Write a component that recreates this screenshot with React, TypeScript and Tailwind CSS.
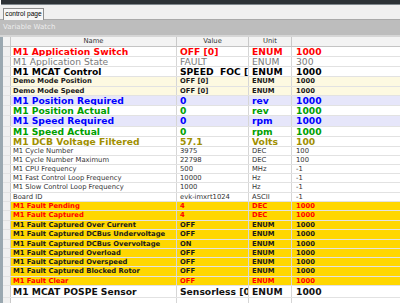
import React from "react";

type Row = {
  name: string;
  value: string;
  unit: string;
  period: string;
  h: number;
  text: string;
  bg: string;
};

const BIG = "text-[9.2px] font-bold";
const SMALLB = "text-[6.8px] font-bold";
const SMALL = "text-[6.8px]";

const rows: Row[] = [
  { name: "M1 Application Switch", value: "OFF [0]", unit: "ENUM", period: "1000", h: 10, text: `${BIG} text-[#ff0000]`, bg: "bg-white" },
  { name: "M1 Application State", value: "FAULT", unit: "ENUM", period: "300", h: 10, text: "text-[9.2px] text-[#7a7a7a]", bg: "bg-white" },
  { name: "M1 MCAT Control", value: "SPEED\u00a0\u00a0FOC [4]", unit: "ENUM", period: "1000", h: 10, text: `${BIG} text-black`, bg: "bg-white" },
  { name: "Demo Mode Position", value: "OFF [0]", unit: "ENUM", period: "1000", h: 10, text: `${SMALLB} text-[#1a1a1a]`, bg: "bg-[#fdf9e1]" },
  { name: "Demo Mode Speed", value: "OFF [0]", unit: "ENUM", period: "1000", h: 9, text: `${SMALLB} text-[#1a1a1a]`, bg: "bg-[#fdf9e1]" },
  { name: "M1 Position Required", value: "0", unit: "rev", period: "1000", h: 10, text: `${BIG} text-[#0000ff]`, bg: "bg-[#e6e6fa]" },
  { name: "M1 Position Actual", value: "0", unit: "rev", period: "1000", h: 10, text: `${BIG} text-[#00a000]`, bg: "bg-white" },
  { name: "M1 Speed Required", value: "0", unit: "rpm", period: "1000", h: 11, text: `${BIG} text-[#0000ff]`, bg: "bg-[#e6e6fa]" },
  { name: "M1 Speed Actual", value: "0", unit: "rpm", period: "1000", h: 10, text: `${BIG} text-[#00a000]`, bg: "bg-white" },
  { name: "M1 DCB Voltage Filtered", value: "57.1", unit: "Volts", period: "100", h: 10, text: `${BIG} text-[#a08f00]`, bg: "bg-white" },
  { name: "M1 Cycle Number", value: "3975", unit: "DEC", period: "100", h: 9, text: `${SMALL} text-[#333333]`, bg: "bg-white" },
  { name: "M1 Cycle Number Maximum", value: "22798", unit: "DEC", period: "100", h: 9, text: `${SMALL} text-[#333333]`, bg: "bg-white" },
  { name: "M1 CPU Frequency", value: "500", unit: "MHz", period: "-1", h: 9, text: `${SMALL} text-[#333333]`, bg: "bg-white" },
  { name: "M1 Fast Control Loop Frequency", value: "10000", unit: "Hz", period: "-1", h: 9, text: `${SMALL} text-[#333333]`, bg: "bg-white" },
  { name: "M1 Slow Control Loop Frequency", value: "1000", unit: "Hz", period: "-1", h: 10, text: `${SMALL} text-[#333333]`, bg: "bg-white" },
  { name: "Board ID", value: "evk-imxrt1024", unit: "ASCII", period: "-1", h: 9, text: `${SMALL} text-[#333333]`, bg: "bg-white" },
  { name: "M1 Fault Pending", value: "4", unit: "DEC", period: "1000", h: 9, text: `${SMALLB} text-[#ff0000]`, bg: "bg-[#ffd700]" },
  { name: "M1 Fault Captured", value: "4", unit: "DEC", period: "1000", h: 10, text: `${SMALLB} text-[#ff0000]`, bg: "bg-[#ffd700]" },
  { name: "M1 Fault Captured Over Current", value: "OFF", unit: "ENUM", period: "1000", h: 9, text: `${SMALLB} text-[#1a1a1a]`, bg: "bg-[#ffd700]" },
  { name: "M1 Fault Captured DCBus Undervoltage", value: "OFF", unit: "ENUM", period: "1000", h: 10, text: `${SMALLB} text-[#1a1a1a]`, bg: "bg-[#ffd700]" },
  { name: "M1 Fault Captured DCBus Overvoltage", value: "ON", unit: "ENUM", period: "1000", h: 9, text: `${SMALLB} text-[#1a1a1a]`, bg: "bg-[#ffd700]" },
  { name: "M1 Fault Captured Overload", value: "OFF", unit: "ENUM", period: "1000", h: 9, text: `${SMALLB} text-[#1a1a1a]`, bg: "bg-[#ffd700]" },
  { name: "M1 Fault Captured Overspeed", value: "OFF", unit: "ENUM", period: "1000", h: 9, text: `${SMALLB} text-[#1a1a1a]`, bg: "bg-[#ffd700]" },
  { name: "M1 Fault Captured Blocked Rotor", value: "OFF", unit: "ENUM", period: "1000", h: 10, text: `${SMALLB} text-[#1a1a1a]`, bg: "bg-[#ffd700]" },
  { name: "M1 Fault Clear", value: "OFF", unit: "ENUM", period: "1000", h: 9, text: `${SMALLB} text-[#ff0000]`, bg: "bg-[#ffd700]" },
  { name: "M1 MCAT POSPE Sensor", value: "Sensorless [0]", unit: "ENUM", period: "1000", h: 12, text: "text-[9.2px] font-bold text-[#111111]", bg: "bg-white" },
  { name: "", value: "", unit: "", period: "", h: 14, text: "", bg: "bg-white" },
];

function TableRow({ r }: { r: Row }) {
  return (
    <div className={`flex ${r.bg} border-b border-[#e2e2e2] leading-none`} style={{ height: r.h }}>
      <div className="w-[8px] shrink-0 bg-[#f0f0f0] border-r border-[#c9c9c9]" />
      <div className={`w-[166px] shrink-0 border-r border-[#d6d6d6] pl-[2px] flex items-center overflow-hidden whitespace-nowrap ${r.text}`}>
        {r.name}
      </div>
      <div className={`w-[72px] shrink-0 border-r border-[#d6d6d6] pl-[3px] flex items-center overflow-hidden whitespace-nowrap ${r.text}`}>
        {r.value}
      </div>
      <div className={`w-[43px] shrink-0 border-r border-[#d6d6d6] pl-[3px] flex items-center overflow-hidden whitespace-nowrap ${r.text}`}>
        {r.unit}
      </div>
      <div className={`flex-1 pl-[4px] flex items-center overflow-hidden whitespace-nowrap ${r.text}`}>
        {r.period}
      </div>
    </div>
  );
}

export default function App() {
  return (
    <div className="w-[400px] h-[303px] overflow-hidden bg-white font-['DejaVu_Sans',sans-serif] relative">
      {/* top dark bar */}
      <div className="h-[5px] bg-[#2d3236] border-b border-[#7f878c] ml-[1px]" />
      {/* tab strip */}
      <div className="h-[15px] bg-[#f0f0f0] border-b border-[#a9a9a9] flex items-end pl-[3px]">
        <div className="h-[12px] w-[41px] bg-[#f7f7f7] border border-b-0 border-[#8e8e8e] text-[6.6px] text-black font-['Liberation_Sans',sans-serif] whitespace-nowrap flex items-center justify-center leading-none -mb-px">
          control page
        </div>
      </div>
      {/* title bar */}
      <div className="h-[17px] bg-[#bdbdbd] border-b-2 border-[#d6d6d6] flex items-center pl-[3px] text-[7px] text-[#ececec] leading-none">
        Variable Watch
      </div>
      {/* table */}
      <div className="flex">
        <div className="w-[3px] shrink-0 bg-[#9aa8b0]" />
        <div className="flex-1 flex flex-col">
          <div className="flex h-[10px] bg-[#f3f3f3] border-b border-[#c4c4c4] text-[6.8px] text-[#333333] leading-none">
            <div className="w-[8px] shrink-0 border-r border-[#c9c9c9]" />
            <div className="w-[166px] shrink-0 border-r border-[#c9c9c9] flex items-center justify-center">Name</div>
            <div className="w-[72px] shrink-0 border-r border-[#c9c9c9] flex items-center justify-center">Value</div>
            <div className="w-[43px] shrink-0 border-r border-[#c9c9c9] flex items-center justify-center">Unit</div>
            <div className="flex-1" />
          </div>
          {rows.map((r, i) => (
            <TableRow key={i} r={r} />
          ))}
        </div>
      </div>
    </div>
  );
}
